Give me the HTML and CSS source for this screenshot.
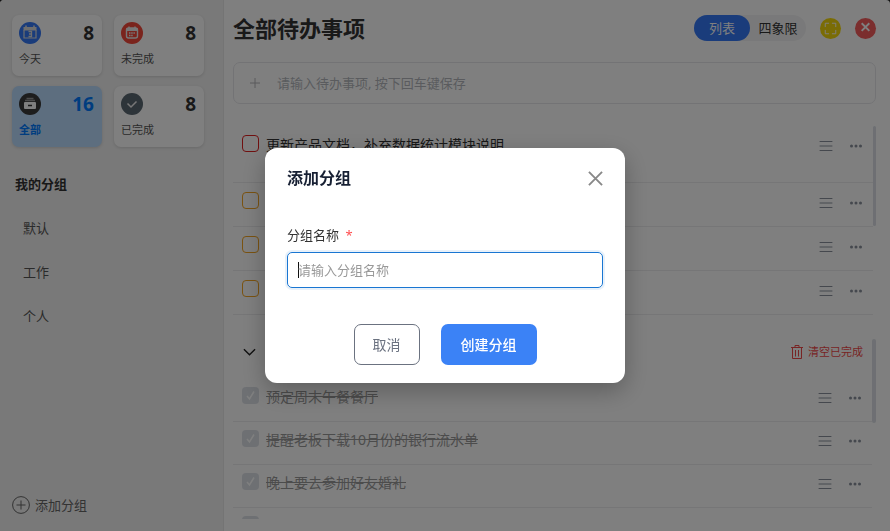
FILE: index.html
```html
<!DOCTYPE html>
<html lang="zh-CN">
<head>
<meta charset="utf-8">
<title>待办事项</title>
<link rel="stylesheet" href="styles.css">
</head>
<body>
<svg class="defs" aria-hidden="true">
  <symbol id="menu" viewBox="0 0 14 12"><path d="M1 1.5h12M1 6h12M1 10.5h12" fill="none" stroke="currentColor" stroke-linecap="round"/></symbol>
  <symbol id="more" viewBox="0 0 14 12"><g fill="currentColor" stroke="none"><circle cx="2.5" cy="6" r="1.5"/><circle cx="7" cy="6" r="1.5"/><circle cx="11.5" cy="6" r="1.5"/></g></symbol>
</svg>
<div class="app">
  <aside class="sidebar">
    <div class="stats">
      <button class="stat"><span class="stat-top"><svg class="badge" viewBox="0 0 22 22"><circle cx="11" cy="11" r="11" fill="#3478f6"/><path d="M4.500 5h13v3.500h-13z" fill="#ddd"/><path d="M7 3.500v3M15 3.500v3" stroke="#ddd" stroke-width="1.600"/><path d="M5 8v8h12V8" fill="none" stroke="#ddd" stroke-width="1.200"/><path d="M9.500 9.500h3v5h-3M10 12h2.500" fill="none" stroke="#ddd" stroke-width="1.300"/></svg><b>8</b></span><span>今天</span></button>
      <button class="stat"><span class="stat-top"><svg class="badge" viewBox="0 0 22 22"><circle cx="11" cy="11" r="11" fill="#f5483b"/><rect x="5.500" y="6" width="11" height="10" rx="2" fill="none" stroke="#eee" stroke-width="1.400"/><path d="M5.500 7.500h11" stroke="#eee" stroke-width="3"/><path d="M8 4.500v2M14 4.500v2" stroke="#eee" stroke-width="1.400"/><path d="M8 11h6.500M8 13.500h4" stroke="#eee" stroke-dasharray="1.500 .7" stroke-width="1.300"/></svg><b>8</b></span><span>未完成</span></button>
      <button class="stat active"><span class="stat-top"><svg class="badge" viewBox="0 0 22 22"><circle cx="11" cy="11" r="11" fill="#3a3a3a"/><path d="M7.500 5.500h7M6 7.500h10" stroke="#999" stroke-width="1.600"/><rect x="5" y="9" width="12" height="7" rx="1" fill="#fff"/><path d="M9 12.500h4" stroke="#333" stroke-width="1.500"/></svg><b>16</b></span><span>全部</span></button>
      <button class="stat"><span class="stat-top"><svg class="badge" viewBox="0 0 22 22"><circle cx="11" cy="11" r="11" fill="#5b6872"/><path d="M6.500 10.500l3.500 3.500 5.500-5.500" fill="none" stroke="#eee" stroke-width="1.500"/></svg><b>8</b></span><span>已完成</span></button>
    </div>
    <h2>我的分组</h2>
    <nav class="groups"><a href="#default">默认</a><a href="#work">工作</a><a href="#personal">个人</a></nav>
    <button class="add-group"><svg viewBox="0 0 18 18"><circle cx="9" cy="9" r="8.400"/><path d="M9 4.500v9M4.500 9h9"/></svg>添加分组</button>
  </aside>
  <main class="main">
    <header class="topbar">
      <h1>全部待办事项</h1>
      <div class="views"><button class="on">列表</button><button>四象限</button></div>
      <button class="round yellow" aria-label="全屏"><svg viewBox="0 0 22 22"><path d="M5.500 9.500v-4h4M12.500 5.500h4v4M16.500 12.500v4h-4M9.500 16.500h-4v-4"/></svg></button>
      <button class="round red" aria-label="关闭"><svg viewBox="0 0 22 22"><path d="M7 5.500l8 8M15 5.500l-8 8"/></svg></button>
    </header>
    <label class="new-todo"><svg viewBox="0 0 10 10"><path d="M5 0v10M0 5h10"/></svg><input type="text" placeholder="请输入待办事项, 按下回车键保存"></label>
    <section class="open">
      <ul>
        <li class="tall"><label><input type="checkbox" class="urgent"><span>更新产品文档，补充数据统计模块说明</span></label><button aria-label="排序"><svg><use href="#menu"/></svg></button><button aria-label="更多"><svg><use href="#more"/></svg></button></li>
        <li><label><input type="checkbox" aria-label="待办"></label><button aria-label="排序"><svg><use href="#menu"/></svg></button><button aria-label="更多"><svg><use href="#more"/></svg></button></li>
        <li><label><input type="checkbox" aria-label="待办"></label><button aria-label="排序"><svg><use href="#menu"/></svg></button><button aria-label="更多"><svg><use href="#more"/></svg></button></li>
        <li><label><input type="checkbox" aria-label="待办"></label><button aria-label="排序"><svg><use href="#menu"/></svg></button><button aria-label="更多"><svg><use href="#more"/></svg></button></li>
      </ul>
      <i class="thumb"></i>
    </section>
    <section class="done">
      <div class="done-body">
        <div class="done-head"><button aria-label="折叠"><svg class="chevron" viewBox="0 0 14 8"><path d="M1 1l6 6 6-6"/></svg></button>
          <button class="clear"><svg viewBox="0 0 12 14"><path d="M0 2.500h12M4 2V.5h4V2M1.500 3v10.500h9V3M4.500 5v6.500M7.500 5v6.500"/></svg>清空已完成</button></div>
        <ul>
          <li><label><input type="checkbox" checked><span>预定周末午餐餐厅</span></label><button aria-label="排序"><svg><use href="#menu"/></svg></button><button aria-label="更多"><svg><use href="#more"/></svg></button></li>
          <li><label><input type="checkbox" checked><span>提醒老板下载10月份的银行流水单</span></label><button aria-label="排序"><svg><use href="#menu"/></svg></button><button aria-label="更多"><svg><use href="#more"/></svg></button></li>
          <li><label><input type="checkbox" checked><span>晚上要去参加好友婚礼</span></label><button aria-label="排序"><svg><use href="#menu"/></svg></button><button aria-label="更多"><svg><use href="#more"/></svg></button></li>
          <li><label><input type="checkbox" checked aria-label="待办"></label></li>
        </ul>
      </div>
      <i class="thumb"></i>
    </section>
  </main>
</div>
<div class="overlay">
  <form class="modal" role="dialog" aria-labelledby="dialog-title">
    <header><h2 id="dialog-title">添加分组</h2><button type="button" class="close" aria-label="关闭"><svg viewBox="0 0 16 16"><path d="M1 1l14 14M15 1L1 15"/></svg></button></header>
    <label class="field-label" for="group-name">分组名称 <em>*</em></label>
    <input id="group-name" type="text" placeholder="请输入分组名称" autofocus>
    <footer><button type="button" class="cancel">取消</button><button type="submit" class="create">创建分组</button></footer>
  </form>
</div>
</body>
</html>
```
FILE: styles.css
```css
* { box-sizing: border-box; }
html, body { height: 100%; margin: 0; }
body { font: 13px/20px "Noto Sans", "Noto Sans CJK SC", sans-serif; color: #333; overflow: hidden; background: #222; }
button { border: 0; padding: 0; background: none; font: inherit; color: inherit; }
input { font: inherit; margin: 0; }
h1, h2, ul { margin: 0; padding: 0; }
ul { list-style: none; }
svg { display: block; flex: none; fill: none; stroke: currentColor; }
.defs { display: none; }
.app { display: flex; height: 100vh; border-radius: 4px 4px 0 0; background: #fff; overflow: hidden; }

.sidebar { flex: none; width: 224px; display: flex; flex-direction: column; padding: 15px 19px 16px 12px; background: #f2f2f2; border-right: 1px solid #e9e9e9; }
.stats { display: grid; grid-template-columns: 1fr 1fr; gap: 10px 12px; }
.stat { display: flex; flex-direction: column; justify-content: space-between; height: 61px; padding: 7px 8px 7px 7px; border-radius: 7px; background: #fff; box-shadow: 0 1px 3px #0002; font-size: 11px; text-align: left; color: #555; }
.stat-top { display: flex; justify-content: space-between; align-items: center; height: 22px; }
.stat b { font-size: 19px; font-weight: 700; color: #333; }
.badge { width: 22px; height: 22px; stroke: none; }
.stat.active { background: #badcff; color: #007aff; font-weight: 700; }
.active b { color: #007aff; }
.sidebar h2 { margin: 27px 3px 0; font-size: 13px; line-height: 20px; }
.groups { display: flex; flex-direction: column; gap: 24px; padding: 24px 11px; }
.groups a { color: #555; text-decoration: none; }
.add-group { display: flex; align-items: center; gap: 5px; margin-top: auto; color: #666; }
.add-group svg { width: 18px; height: 18px; }

.main { flex: 1; min-width: 0; display: flex; flex-direction: column; padding: 12px 14px 12px 9px; }
.topbar { display: flex; align-items: center; height: 32px; }
h1 { flex: 1; font-size: 22px; line-height: 32px; }
.views { display: flex; height: 26px; margin-right: 14px; border-radius: 13px; background: #f3f3f4; }
.views button { width: 56px; border-radius: 13px; }
.views .on { background: #3478f6; color: #fff; }
.round { width: 21px; height: 21px; border-radius: 11px; color: #fff; }
.round svg { width: 21px; height: 21px; }
.yellow { background: #f5d90a; margin-right: 14px; }
.red { background: #f75c5c; }
.red svg { stroke-width: 2; }
.new-todo { display: flex; align-items: center; gap: 17px; height: 42px; margin-top: 18px; padding: 0 16px; border: 1px solid #e6e6ea; border-radius: 7px; color: #b4b4b8; }
.new-todo svg { width: 10px; height: 10px; stroke-width: 1; }
.new-todo input { flex: 1; padding: 0; border: 0; outline: 0; background: none; }
.new-todo input::placeholder { color: #b4b7bd; }

section { display: flex; justify-content: space-between; }
.open { margin-top: 22px; }
.open ul, .done-body { flex: 1; min-width: 0; }
.thumb { flex: none; width: 3px; height: 100px; border-radius: 2px; background: #dcdfe6; }
li { display: flex; align-items: flex-start; gap: 16px; height: 44px; padding: 9px 10px 0 9px; border-bottom: 1px solid #ececee; color: #8a919c; }
li.tall { height: 57px; }
li label { flex: 1; display: flex; gap: 7px; font-size: 14px; color: #333; }
li button { height: 22px; }
li button svg { width: 14px; height: 12px; }
li input { appearance: none; flex: none; width: 17px; height: 17px; border: 1px solid #f5a623; border-radius: 4px; }
li .urgent { border-color: #e02020; }
.done { flex: 1; min-height: 0; margin-top: 24px; overflow: hidden; }
.done .thumb { width: 4px; height: 84px; }
.done-head { display: flex; justify-content: space-between; align-items: center; height: 26px; margin-bottom: 14px; padding: 0 9px 0 10px; }
.chevron { width: 13px; height: 8px; stroke-width: 1.5; color: #222; }
.clear { display: flex; align-items: center; gap: 5px; font-size: 11px; color: #f04848; }
.clear svg { width: 12px; height: 14px; }
.done li { height: 43px; padding-top: 8px; }
.done li label { color: #999; text-decoration: line-through; }
.done li input { border: 0; background: #dce1e7 url("data:image/svg+xml,%3Csvg xmlns='http://www.w3.org/2000/svg' viewBox='0 0 17 17'%3E%3Cpath d='M5 9l2.500 3L12 4.500' fill='none' stroke='white' stroke-width='1.500'/%3E%3C/svg%3E"); }

.overlay { position: fixed; inset: 0; display: grid; place-items: center; background: #00000080; }
.modal { width: 360px; padding: 20px 22px 18px; border-radius: 12px; background: #fff; box-shadow: 0 8px 24px #0004; }
.modal header { display: flex; justify-content: space-between; align-items: center; height: 20px; }
.modal h2 { font-size: 16px; color: #172033; }
.close { color: #888; }
.close svg { width: 15px; height: 15px; stroke-width: 2; }
.field-label { display: block; margin: 37px 0 7px; color: #333; }
.field-label em { margin-left: 3px; font-style: normal; color: #ff4d4f; }
.modal input { display: block; width: 100%; height: 36px; padding: 0 10px; border: 1px solid #1976d2; border-radius: 5px; outline: 0; box-shadow: 0 0 0 2px #1976d21a; }
.modal input:placeholder-shown { caret-color: transparent; background: linear-gradient(#111, #111) 10px center / 1px 16px no-repeat; }
.modal input::placeholder { color: #999; }
.modal footer { display: flex; justify-content: center; gap: 21px; margin-top: 36px; font-size: 14px; }
.modal footer button { height: 41px; border-radius: 7px; }
.modal .cancel { padding: 0 18px; border: 1px solid #6b7280; color: #6b7280; }
.modal .create { padding: 0 20px; background: #3b82f6; color: #fff; font-weight: 500; }
```
